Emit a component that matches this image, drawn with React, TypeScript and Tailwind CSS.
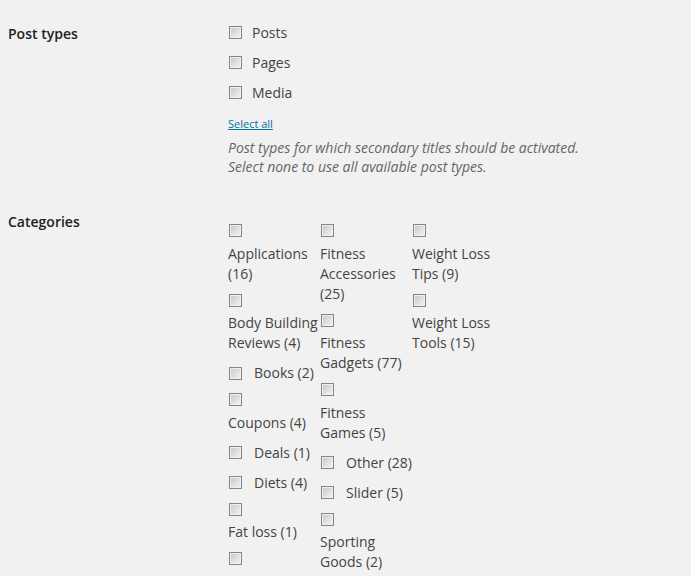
import React from 'react';

type Item = { lines?: string[]; inline?: string };

const columns: Item[][] = [
  [
    { lines: ['Applications', '(16)'] },
    { lines: ['Body Building', 'Reviews (4)'] },
    { inline: 'Books (2)' },
    { lines: ['Coupons (4)'] },
    { inline: 'Deals (1)' },
    { inline: 'Diets (4)' },
    { lines: ['Fat loss (1)'] },
    { lines: [] },
  ],
  [
    { lines: ['Fitness', 'Accessories', '(25)'] },
    { lines: ['Fitness', 'Gadgets (77)'] },
    { lines: ['Fitness', 'Games (5)'] },
    { inline: 'Other (28)' },
    { inline: 'Slider (5)' },
    { lines: ['Sporting', 'Goods (2)'] },
  ],
  [
    { lines: ['Weight Loss', 'Tips (9)'] },
    { lines: ['Weight Loss', 'Tools (15)'] },
  ],
];

function Checkbox() {
  return (
    <input
      type="checkbox"
      className="appearance-none m-0 ml-[1px] w-[13px] h-[13px] shrink-0 border border-[#858585] bg-linear-to-br from-[#c6c6c6] to-[#f6f6f6] shadow-[inset_0_0_0_1px_#efefef]"
    />
  );
}

function CategoryItem({ item }: { item: Item }) {
  if (item.inline) {
    return (
      <label className="flex items-center h-[20px] whitespace-nowrap">
        <Checkbox />
        <span className="ml-[12px] leading-[20px]">{item.inline}</span>
      </label>
    );
  }
  return (
    <label className="flex flex-col">
      <Checkbox />
      <div className="mt-[6.5px] leading-[20px] whitespace-nowrap">
        {item.lines?.map((l) => (
          <div key={l}>{l}</div>
        ))}
      </div>
    </label>
  );
}

export default function App() {
  return (
    <div className="h-[576px] overflow-hidden bg-[#f1f1f1] font-['Open_Sans',sans-serif] text-[14px] text-[#444]">
      {/* Post types */}
      <div className="flex pl-[8px]">
        <div className="w-[220px] pt-[24px] leading-[20px] font-semibold text-[#222]">Post types</div>
        <div className="pt-[17px]">
          {['Posts', 'Pages', 'Media'].map((t) => (
            <label key={t} className="flex items-center h-[30px]">
              <Checkbox />
              <span className="ml-[10px]">{t}</span>
            </label>
          ))}
          <a href="#" className="block mt-[9px] text-[11px] leading-[16px] underline text-[#0074a2]">
            Select all
          </a>
          <p className="mt-[6px] italic text-[14px] leading-[19px] text-[#666]">
            Post types for which secondary titles should be activated.
            <br />
            Select none to use all available post types.
          </p>
        </div>
      </div>

      {/* Categories */}
      <div className="flex pl-[8px] mt-[24px]">
        <div className="w-[220px] pt-[12px] leading-[20px] font-semibold text-[#222]">Categories</div>
        <div className="pt-[24px] flex">
          {columns.map((col, i) => (
            <div key={i} className="w-[92px] flex flex-col gap-[10px]">
              {col.map((item, j) => (
                <CategoryItem key={j} item={item} />
              ))}
            </div>
          ))}
        </div>
      </div>
    </div>
  );
}
